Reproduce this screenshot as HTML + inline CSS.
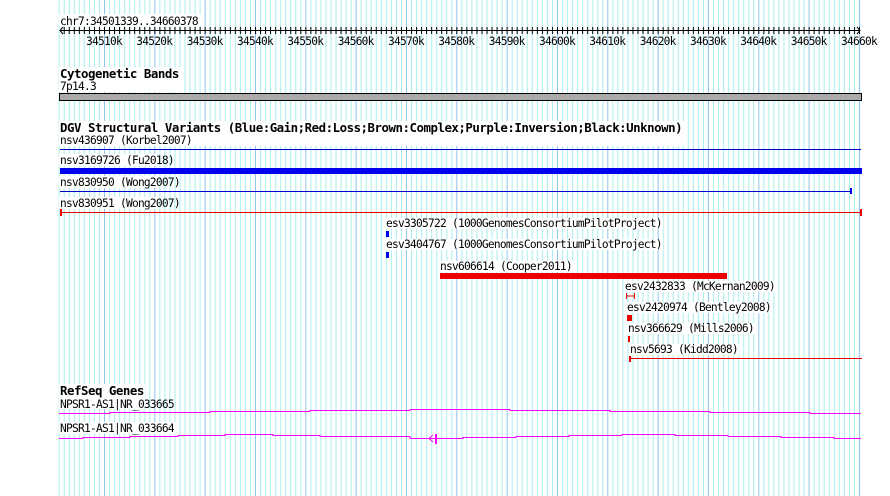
<!DOCTYPE html>
<html><head><meta charset="utf-8"><style>
html,body{margin:0;padding:0;background:#fff;}
svg{display:block}
text{font-family:"DejaVu Sans Mono","Liberation Mono",monospace;font-size:11.2px;letter-spacing:-0.74px;fill:#000}
.b{font-weight:bold;font-size:12.4px;letter-spacing:-0.47px}
</style></head><body>
<svg width="890" height="496" viewBox="0 0 890 496" xmlns="http://www.w3.org/2000/svg">
<defs>
<pattern id="g" patternUnits="userSpaceOnUse" x="53.67" y="0" width="50.33" height="496">
<rect x="0" y="0" width="1" height="496" fill="#8cc4ee"/>
<rect x="5.03" width="1" height="496" fill="#a8eeee"/>
<rect x="10.07" width="1" height="496" fill="#a8eeee"/>
<rect x="15.1" width="1" height="496" fill="#a8eeee"/>
<rect x="20.13" width="1" height="496" fill="#a8eeee"/>
<rect x="25.17" width="1" height="496" fill="#a8eeee"/>
<rect x="30.2" width="1" height="496" fill="#a8eeee"/>
<rect x="35.23" width="1" height="496" fill="#a8eeee"/>
<rect x="40.27" width="1" height="496" fill="#a8eeee"/>
<rect x="45.3" width="1" height="496" fill="#a8eeee"/>
</pattern>
<pattern id="t" patternUnits="userSpaceOnUse" x="53.67" y="0" width="5.033" height="10">
<rect x="0" y="0" width="1" height="10" fill="#000"/>
</pattern>
</defs>
<rect x="58" y="0" width="804" height="496" fill="url(#g)"/>
<rect x="59" y="14" width="142" height="12" fill="#fff"/>
<rect x="59" y="67" width="122" height="25" fill="#fff"/>
<rect x="59" y="121" width="626" height="25" fill="#fff"/>
<rect x="59" y="154" width="100" height="12" fill="#fff"/>
<rect x="59" y="176" width="100" height="12" fill="#fff"/>
<rect x="59" y="197" width="100" height="12" fill="#fff"/>
<rect x="385" y="218" width="278" height="11" fill="#fff"/>
<rect x="385" y="239" width="278" height="11" fill="#fff"/>
<rect x="439" y="261" width="134" height="11" fill="#fff"/>
<rect x="624" y="281" width="152" height="11" fill="#fff"/>
<rect x="626" y="302" width="146" height="11" fill="#fff"/>
<rect x="627" y="323" width="128" height="11" fill="#fff"/>
<rect x="629" y="344" width="110" height="11" fill="#fff"/>
<rect x="59" y="384" width="86" height="25" fill="#fff"/>
<rect x="59" y="422" width="118" height="12" fill="#fff"/>

<text x="60" y="25">chr7:34501339..34660378</text>
<rect x="60" y="30" width="800" height="1" fill="#000"/>
<rect x="60" y="27" width="800" height="7" fill="url(#t)"/>
<path d="M63 27 L60 30.5 L63 34 M857 27 L860 30.5 L857 34" stroke="#000" fill="none"/>
<g text-anchor="middle">
<text x="104" y="45">34510k</text><text x="154.3" y="45">34520k</text><text x="204.7" y="45">34530k</text>
<text x="255" y="45">34540k</text><text x="305.3" y="45">34550k</text><text x="355.7" y="45">34560k</text>
<text x="406" y="45">34570k</text><text x="456.3" y="45">34580k</text><text x="506.7" y="45">34590k</text>
<text x="557" y="45">34600k</text><text x="607.3" y="45">34610k</text><text x="657.7" y="45">34620k</text>
<text x="708" y="45">34630k</text><text x="758.3" y="45">34640k</text><text x="808.7" y="45">34650k</text>
<text x="859" y="45">34660k</text>
</g>

<text class="b" x="60" y="78">Cytogenetic Bands</text>
<text x="60" y="90">7p14.3</text>
<rect x="59.5" y="93.5" width="802" height="7" fill="#aaa" stroke="#000"/>

<text class="b" x="60" y="132">DGV Structural Variants (Blue:Gain;Red:Loss;Brown:Complex;Purple:Inversion;Black:Unknown)</text>
<text x="60" y="144">nsv436907 (Korbel2007)</text>
<rect x="60" y="149" width="801" height="1" fill="#00c"/>
<text x="60" y="164">nsv3169726 (Fu2018)</text>
<rect x="60" y="168" width="802" height="6" fill="#00e"/>
<text x="60" y="186">nsv830950 (Wong2007)</text>
<rect x="60" y="191" width="792" height="1" fill="#00c"/>
<rect x="850" y="188" width="2" height="6" fill="#00e"/>
<text x="60" y="207">nsv830951 (Wong2007)</text>
<rect x="61" y="212" width="800" height="1" fill="#e00"/>
<rect x="60" y="209" width="2" height="7" fill="#e00"/>
<rect x="860" y="209" width="2" height="7" fill="#e00"/>

<text x="386" y="227">esv3305722 (1000GenomesConsortiumPilotProject)</text>
<rect x="386" y="231" width="3" height="6" fill="#00e"/>
<text x="386" y="248">esv3404767 (1000GenomesConsortiumPilotProject)</text>
<rect x="386" y="252" width="3" height="6" fill="#00e"/>
<text x="440" y="270">nsv606614 (Cooper2011)</text>
<rect x="440" y="273" width="287" height="6" fill="#e00"/>
<text x="625" y="290">esv2432833 (McKernan2009)</text>
<path d="M626.5 293v6M634.5 293v6M626 296h9" stroke="#e00"/>
<text x="627" y="311">esv2420974 (Bentley2008)</text>
<rect x="627" y="315" width="5" height="6" fill="#e00"/>
<text x="628" y="332">nsv366629 (Mills2006)</text>
<rect x="628" y="336" width="2" height="6" fill="#e00"/>
<text x="630" y="353">nsv5693 (Kidd2008)</text>
<rect x="630" y="358" width="232" height="1" fill="#e00"/>
<rect x="629" y="356" width="2" height="6" fill="#e00"/>

<text class="b" x="60" y="395">RefSeq Genes</text>
<text x="60" y="408">NPSR1-AS1|NR_033665</text>
<path d="M59 413.5H110V412.5H210V411.5H310V410.5H410V409.5H510V410.5H610V411.5H710V412.5H810V413.5H861" stroke="#f0f" fill="none"/>
<text x="60" y="432">NPSR1-AS1|NR_033664</text>
<path d="M59 438.5H83V437.5H130V436.5H178V435.5H225V434.5H273V435.5H320V436.5H410V438.5H463V437.5H516V436.5H569V435.5H622V434.5H675V435.5H728V436.5H781V437.5H834V438.5H861" stroke="#f0f" fill="none"/>
<path d="M433 435L429 438.5L433 442" stroke="#f0f" fill="none"/>
<rect x="435" y="434" width="2" height="10" fill="#f0f"/>
</svg>
</body></html>
